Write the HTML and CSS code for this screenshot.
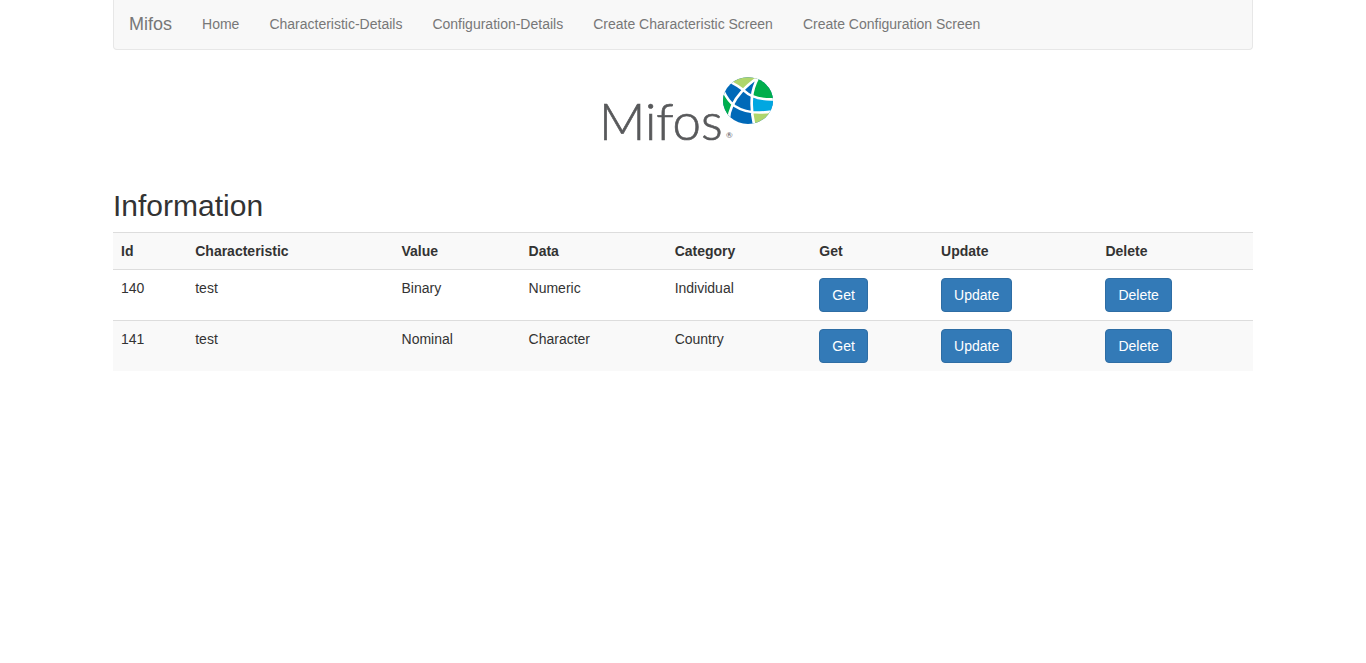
FILE: index.html
```html
<!DOCTYPE html>
<html lang="en">
<head>
<meta charset="utf-8">
<title>Mifos</title>
<link rel="stylesheet" href="styles.css">
</head>
<body>
<div class="container">
  <nav class="navbar">
    <a class="brand" href="#">Mifos</a>
    <ul class="nav-list">
      <li><a href="#">Home</a></li>
      <li><a href="#">Characteristic-Details</a></li>
      <li><a href="#">Configuration-Details</a></li>
      <li><a href="#">Create Characteristic Screen</a></li>
      <li><a href="#">Create Configuration Screen</a></li>
    </ul>
  </nav>
  <div class="logo">
    <svg width="182" height="84" viewBox="24 30 546 252" role="img" aria-label="Mifos logo">
      <defs><clipPath id="globe"><ellipse cx="474" cy="107" rx="75" ry="70"/></clipPath></defs>
      <text class="wordmark" x="27" y="226">Mifos</text>
      <text class="registered" x="408" y="218">®</text>
      <g clip-path="url(#globe)">
        <rect x="396" y="34" width="156" height="146" fill="#0069b8"/>
        <path d="M425 30H503V43Q478 56 461 74Q446 64 428 56Z" fill="#afd66c"/>
        <path d="M503 30H555V104Q520 106 487 95Q486 72 503 40Z" fill="#00ae4c"/>
        <path d="M485 98Q520 107 555 103V138Q520 147 485 142Z" fill="#00a7e1"/>
        <path d="M486 143Q520 146 555 138V182H493Q488 160 486 143Z" fill="#afd66c"/>
        <path d="M390 75L402 84Q412 104 426 117Q417 134 417 160L390 160Z" fill="#00ae4c"/>
        <path d="M506 36Q474 58 455 80Q417 122 416 166M505 36Q488 68 486 96Q482 134 493 182M424 52Q444 62 461 76Q492 106 555 103M400 78Q414 108 434 123Q478 152 555 138" fill="none" stroke="#fff" stroke-width="8"/>
      </g>
    </svg>
  </div>
  <h2>Information</h2>
  <table class="table">
    <thead>
      <tr><th>Id</th><th>Characteristic</th><th>Value</th><th>Data</th><th>Category</th><th>Get</th><th>Update</th><th>Delete</th></tr>
    </thead>
    <tbody>
      <tr><td>140</td><td>test</td><td>Binary</td><td>Numeric</td><td>Individual</td>
        <td><button class="btn" type="button">Get</button></td><td><button class="btn" type="button">Update</button></td><td><button class="btn" type="button">Delete</button></td></tr>
      <tr><td>141</td><td>test</td><td>Nominal</td><td>Character</td><td>Country</td>
        <td><button class="btn" type="button">Get</button></td><td><button class="btn" type="button">Update</button></td><td><button class="btn" type="button">Delete</button></td></tr>
    </tbody>
  </table>
</div>
</body>
</html>
```
FILE: styles.css
```css
* { box-sizing: border-box; }
body {
  margin: 0;
  background: #fff;
  color: #333;
  font: 14px/20px "Helvetica Neue", Helvetica, Arial, "Liberation Sans", sans-serif;
}
.container {
  max-width: 1170px;
  margin: 0 auto;
  padding: 0 15px;
}
.navbar {
  display: flex;
  flex-wrap: wrap;
  margin-bottom: 20px;
  background: #f8f8f8;
  border: 1px solid #e7e7e7;
  border-top: 0;
  border-radius: 0 0 4px 4px;
}
.navbar a {
  display: block;
  padding: 14px 15px 15px;
  color: #777;
  text-decoration: none;
}
.navbar .brand { font-size: 18px; }
.nav-list {
  display: flex;
  flex-wrap: wrap;
  margin: 0;
  padding: 0;
  list-style: none;
}
.logo {
  display: flex;
  justify-content: center;
  padding: 5px 0 10px 12px;
}
.wordmark {
  fill: #58595b;
  stroke: #58595b;
  stroke-width: 2px;
  font-family: Lato, sans-serif;
  font-size: 153px;
  font-weight: 300;
}
.registered {
  fill: #58595b;
  font-family: Lato, sans-serif;
  font-size: 24px;
}
h2 {
  margin: 20px 0 10px;
  font-size: 30px;
  font-weight: 500;
  line-height: 33px;
}
.table {
  width: 100%;
  border-collapse: collapse;
  border-spacing: 0;
}
.table th,
.table td {
  padding: 8px;
  border-top: 1px solid #ddd;
  text-align: left;
  vertical-align: top;
}
.table thead tr,
.table tbody tr:nth-child(even) { background: #f9f9f9; }
.btn {
  display: inline-block;
  padding: 6px 12px;
  border: 1px solid #2e6da4;
  border-radius: 4px;
  background: #337ab7;
  color: #fff;
  font: inherit;
  vertical-align: middle;
  cursor: pointer;
}
```
